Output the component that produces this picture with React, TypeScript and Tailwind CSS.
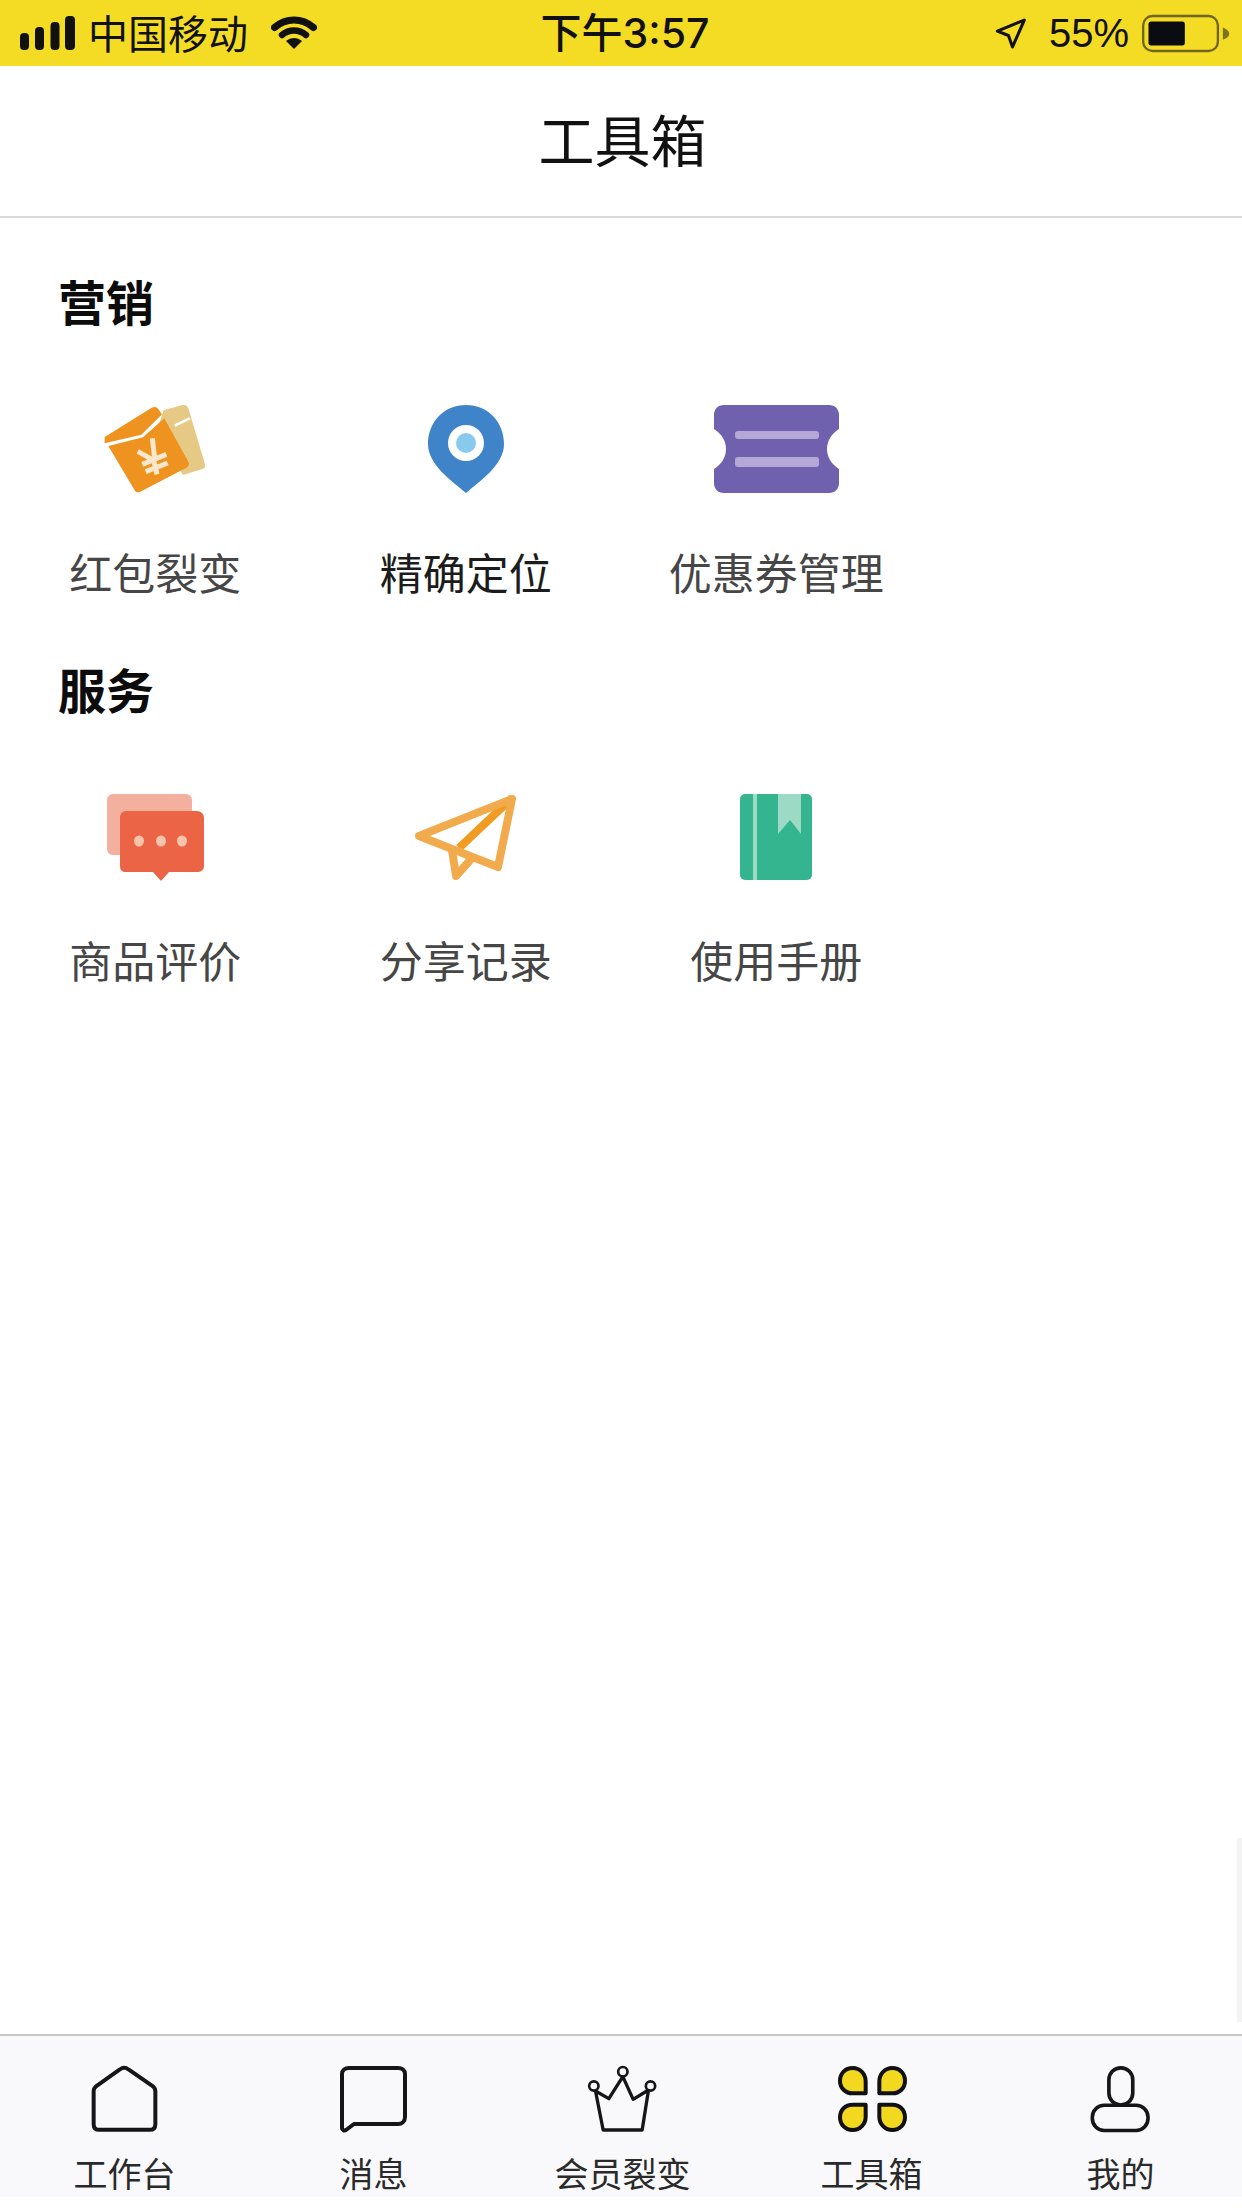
const font = "font-['Noto_Sans_CJK_SC','Noto_Sans',sans-serif]";

function Signal() {
  return (
    <svg width="56" height="34" viewBox="0 0 56 34" className="shrink-0">
      <rect x="0" y="17" width="9" height="17" rx="4" fill="#111" />
      <rect x="15" y="11" width="9" height="23" rx="4" fill="#111" />
      <rect x="30.5" y="6" width="9" height="28" rx="4" fill="#111" />
      <rect x="45" y="0" width="10" height="34" rx="4" fill="#111" />
    </svg>
  );
}

function Wifi() {
  return (
    <svg width="46" height="34" viewBox="0 0 46 34" className="shrink-0">
      <path d="M3.5 11.5 C15 1.5 31 1.5 42.5 11.5" fill="none" stroke="#111" strokeWidth="7" strokeLinecap="round" />
      <path d="M11 19 C18 13 28 13 35 19" fill="none" stroke="#111" strokeWidth="6.5" strokeLinecap="round" />
      <path d="M15 25 C20 21 26 21 31 25 L23 33 Z" fill="#111" />
    </svg>
  );
}

function Locate() {
  return (
    <svg width="32" height="32" viewBox="30 40 95 95" className="shrink-0">
      <path d="M117 49 L37 82 L70 95 L82 129 Z" fill="none" stroke="#111" strokeWidth="9" strokeLinejoin="round" />
    </svg>
  );
}

function Battery() {
  return (
    <svg width="89" height="39" viewBox="465 27 268 118" className="shrink-0">
      <rect x="471" y="33" width="226" height="106" rx="28" fill="none" stroke="#6f651f" strokeWidth="7" />
      <rect x="487" y="50" width="110" height="72" rx="8" fill="#0b0b12" />
      <path d="M712 68 C726 74 731 80 731 87 C731 94 726 100 712 105 Z" fill="#7c7224" />
    </svg>
  );
}

function RedPacket() {
  return (
    <svg width="102" height="88" viewBox="33 30 306 264">
      <path d="M212 46 L268 30 C276 28 283 32 286 40 L336 208 C338 216 334 220 328 222 L270 240 L190 110 Z" fill="#e6c985" />
      <path d="M245 92 L290 70" fill="none" stroke="#fff" strokeWidth="8" />
      <path d="M46 153 L150 127 L214 70 L286 200 C290 208 288 214 280 218 L142 290 C134 294 128 292 124 284 Z" fill="#ee931f" />
      <path d="M176 38 C184 34 192 36 196 42 L207 58 L145 119 L35 145 L35 126 Z" fill="#ee931f" />
      <path d="M178 130 L185 190 M134 169 L182 196 L192 238 M148 208 L220 178 M158 230 L224 204" fill="none" stroke="#fbe8cc" strokeWidth="15" />
    </svg>
  );
}

function Pin() {
  return (
    <svg width="76" height="88" viewBox="0 0 76 88">
      <path d="M38 0 C60 0 76 17 76 39 C76 60 52 76 38 88 C24 76 0 60 0 39 C0 17 16 0 38 0 Z" fill="#3f83c9" />
      <circle cx="38" cy="38" r="18" fill="#fff" />
      <circle cx="38" cy="38" r="10" fill="#88c9ee" />
    </svg>
  );
}

function Ticket() {
  return (
    <svg width="125" height="88" viewBox="0 0 125 88">
      <path d="M10 0 H115 C121 0 125 4 125 10 V24 C109 34 109 54 125 64 V78 C125 84 121 88 115 88 H10 C4 88 0 84 0 78 V64 C16 54 16 34 0 24 V10 C0 4 4 0 10 0 Z" fill="#7061ae" />
      <rect x="21" y="26" width="84" height="8" rx="3" fill="#b5a8d8" />
      <rect x="21" y="52" width="84" height="10" rx="3" fill="#b5a8d8" />
    </svg>
  );
}

function Chat() {
  return (
    <svg width="97" height="87" viewBox="0 0 97 87">
      <rect x="0" y="0" width="85" height="61" rx="6" fill="#f3b09e" />
      <path d="M19 17 H90 C94 17 97 20 97 24 V72 C97 76 94 78 90 78 H62 L54 87 L46 78 H19 C15 78 13 76 13 72 V24 C13 20 15 17 19 17 Z" fill="#ec6446" />
      <ellipse cx="32" cy="47" rx="5" ry="5.5" fill="#f6c4aa" />
      <ellipse cx="54" cy="47" rx="5" ry="5.5" fill="#f6c4aa" />
      <ellipse cx="75" cy="47" rx="5" ry="5.5" fill="#f6c4aa" />
    </svg>
  );
}

function Plane() {
  return (
    <svg width="103" height="87" viewBox="0 0 103 87">
      <path d="M98 4 L45 54" fill="none" stroke="#f09c22" strokeWidth="8" strokeLinejoin="round" />
      <path d="M98 5 L5 42 L84 73 Z" fill="none" stroke="#f2ab4c" strokeWidth="8" strokeLinejoin="round" />
      <path d="M38 56 L42 82 L58 64" fill="none" stroke="#f2ab4c" strokeWidth="8" strokeLinejoin="round" />
    </svg>
  );
}

function Book() {
  return (
    <svg width="72" height="86" viewBox="0 0 72 86">
      <rect x="0" y="0" width="72" height="86" rx="5" fill="#34b48f" />
      <rect x="13" y="0" width="4" height="86" fill="#9ddac6" />
      <path d="M38 0 H61 V40 L50 26 L38 40 Z" fill="#9ddac6" />
    </svg>
  );
}

function TabHome() {
  return (
    <svg width="67" height="68" viewBox="50 27 202 204">
      <path d="M137 40 Q150 30 163 40 L238 92 Q244 97 244 105 V205 Q244 222 227 222 H75 Q58 222 58 205 V105 Q58 97 64 92 Z" fill="none" stroke="#16161a" strokeWidth="12" strokeLinejoin="round" />
    </svg>
  );
}

function TabChat() {
  return (
    <svg width="67" height="68" viewBox="0 0 67 68">
      <path d="M9 3 H58 C62 3 65 5 65 9 V52 C65 56 62 59 58 59 H14 L6 65 C4 66 2 65 2 63 V9 C2 5 5 3 9 3 Z" fill="none" stroke="#16161a" strokeWidth="4" strokeLinejoin="round" />
    </svg>
  );
}

function TabCrown() {
  return (
    <svg width="71" height="68" viewBox="40 27 212 204">
      <path d="M147 62 L178 130 L224 102 L205 222 H88 L65 105 L105 128 Z" fill="none" stroke="#16161a" strokeWidth="10" strokeLinejoin="round" />
      <circle cx="147" cy="47" r="14" fill="#f9f9fb" stroke="#16161a" strokeWidth="8" />
      <circle cx="60" cy="90" r="14" fill="#f9f9fb" stroke="#16161a" strokeWidth="8" />
      <circle cx="230" cy="90" r="14" fill="#f9f9fb" stroke="#16161a" strokeWidth="8" />
    </svg>
  );
}

const petal = "M121 112 H82 C60 112 44 96 44 74 C44 52 60 36 82 36 C104 36 121 54 121 76 Z";

function TabClover() {
  return (
    <svg width="70" height="68" viewBox="35 27 210 204">
      <g fill="#f2d81f" stroke="#111" strokeWidth="12" strokeLinejoin="round">
        <path d={petal} />
        <path d={petal} transform="matrix(-1 0 0 1 283 0)" />
        <path d={petal} transform="matrix(1 0 0 -1 0 258)" />
        <path d={petal} transform="matrix(-1 0 0 -1 283 258)" />
      </g>
    </svg>
  );
}

function TabPerson() {
  return (
    <svg width="63" height="68" viewBox="40 27 190 204">
      <rect x="100" y="35" width="72" height="112" rx="36" fill="none" stroke="#16161a" strokeWidth="11" />
      <rect x="50" y="148" width="168" height="76" rx="36" fill="none" stroke="#16161a" strokeWidth="11" />
    </svg>
  );
}

function Tool({ icon, label, dark }: { icon: React.ReactNode; label: string; dark?: boolean }) {
  return (
    <div className="flex flex-col items-center">
      <div className="flex h-[88px] items-center justify-center">{icon}</div>
      <div className={`mt-[53px] text-[43px] leading-[50px] whitespace-nowrap ${dark ? "text-[#1c1c1c]" : "text-[#464646]"}`}>{label}</div>
    </div>
  );
}

function Tab({ icon, label }: { icon: React.ReactNode; label: string }) {
  return (
    <div className="flex flex-col items-center">
      <div className="flex h-[69px] items-center justify-center">{icon}</div>
      <div className="mt-[20px] text-[34px] leading-[40px] text-[#2a2a2a] whitespace-nowrap">{label}</div>
    </div>
  );
}

export default function App() {
  return (
    <div className={`relative flex h-[2208px] w-[1242px] flex-col overflow-hidden bg-white ${font}`}>
      <div className="flex h-[66px] shrink-0 items-center bg-[#f4dc24] pl-[20px] pr-[12px] text-[#111]">
        <div className="flex flex-1 items-center">
          <Signal />
          <span className="ml-[12px] pb-[2px] text-[40px] leading-[50px]">中国移动</span>
          <span className="ml-[23px]"><Wifi /></span>
        </div>
        <div className="font-['Inter','Noto_Sans_CJK_SC',sans-serif] text-[41px] leading-[50px] font-medium">下午3:57</div>
        <div className="flex flex-1 items-center justify-end">
          <Locate />
          <span className="ml-[22px] mr-[1px] font-['Liberation_Sans',sans-serif] text-[40px] leading-[50px]">55%</span>
          <span className="ml-[11px]"><Battery /></span>
        </div>
      </div>

      <div className="flex h-[152px] shrink-0 items-center justify-center border-b-2 border-[#dadada] pb-[6px] pl-[3px]">
        <h1 className="text-[56px] leading-[64px] text-[#111]">工具箱</h1>
      </div>

      <section className="pt-[53px]">
        <h2 className="pl-[58px] text-[48px] leading-[58px] font-bold text-[#0c0c0c]">营销</h2>
        <div className="mt-[76px] grid grid-cols-4">
          <Tool icon={<RedPacket />} label="红包裂变" />
          <Tool icon={<Pin />} label="精确定位" dark />
          <Tool icon={<Ticket />} label="优惠券管理" />
        </div>
      </section>

      <section className="pt-[63px]">
        <h2 className="pl-[58px] text-[48px] leading-[58px] font-bold text-[#0c0c0c]">服务</h2>
        <div className="mt-[76px] grid grid-cols-4">
          <Tool icon={<Chat />} label="商品评价" />
          <Tool icon={<Plane />} label="分享记录" />
          <Tool icon={<Book />} label="使用手册" />
        </div>
      </section>

      <div className="absolute right-0 top-[1838px] h-[184px] w-[5px] bg-[#f3f3f3]" />

      <div className="mt-auto h-[163px] shrink-0 border-t-2 border-[#c6c6c6] bg-[#f9f9fb] pt-[28px]">
        <div className="grid grid-cols-[repeat(5,249px)]">
          <Tab icon={<TabHome />} label="工作台" />
          <Tab icon={<TabChat />} label="消息" />
          <Tab icon={<TabCrown />} label="会员裂变" />
          <Tab icon={<TabClover />} label="工具箱" />
          <Tab icon={<TabPerson />} label="我的" />
        </div>
      </div>
      <div className="h-[11px] shrink-0 bg-white" />
    </div>
  );
}
